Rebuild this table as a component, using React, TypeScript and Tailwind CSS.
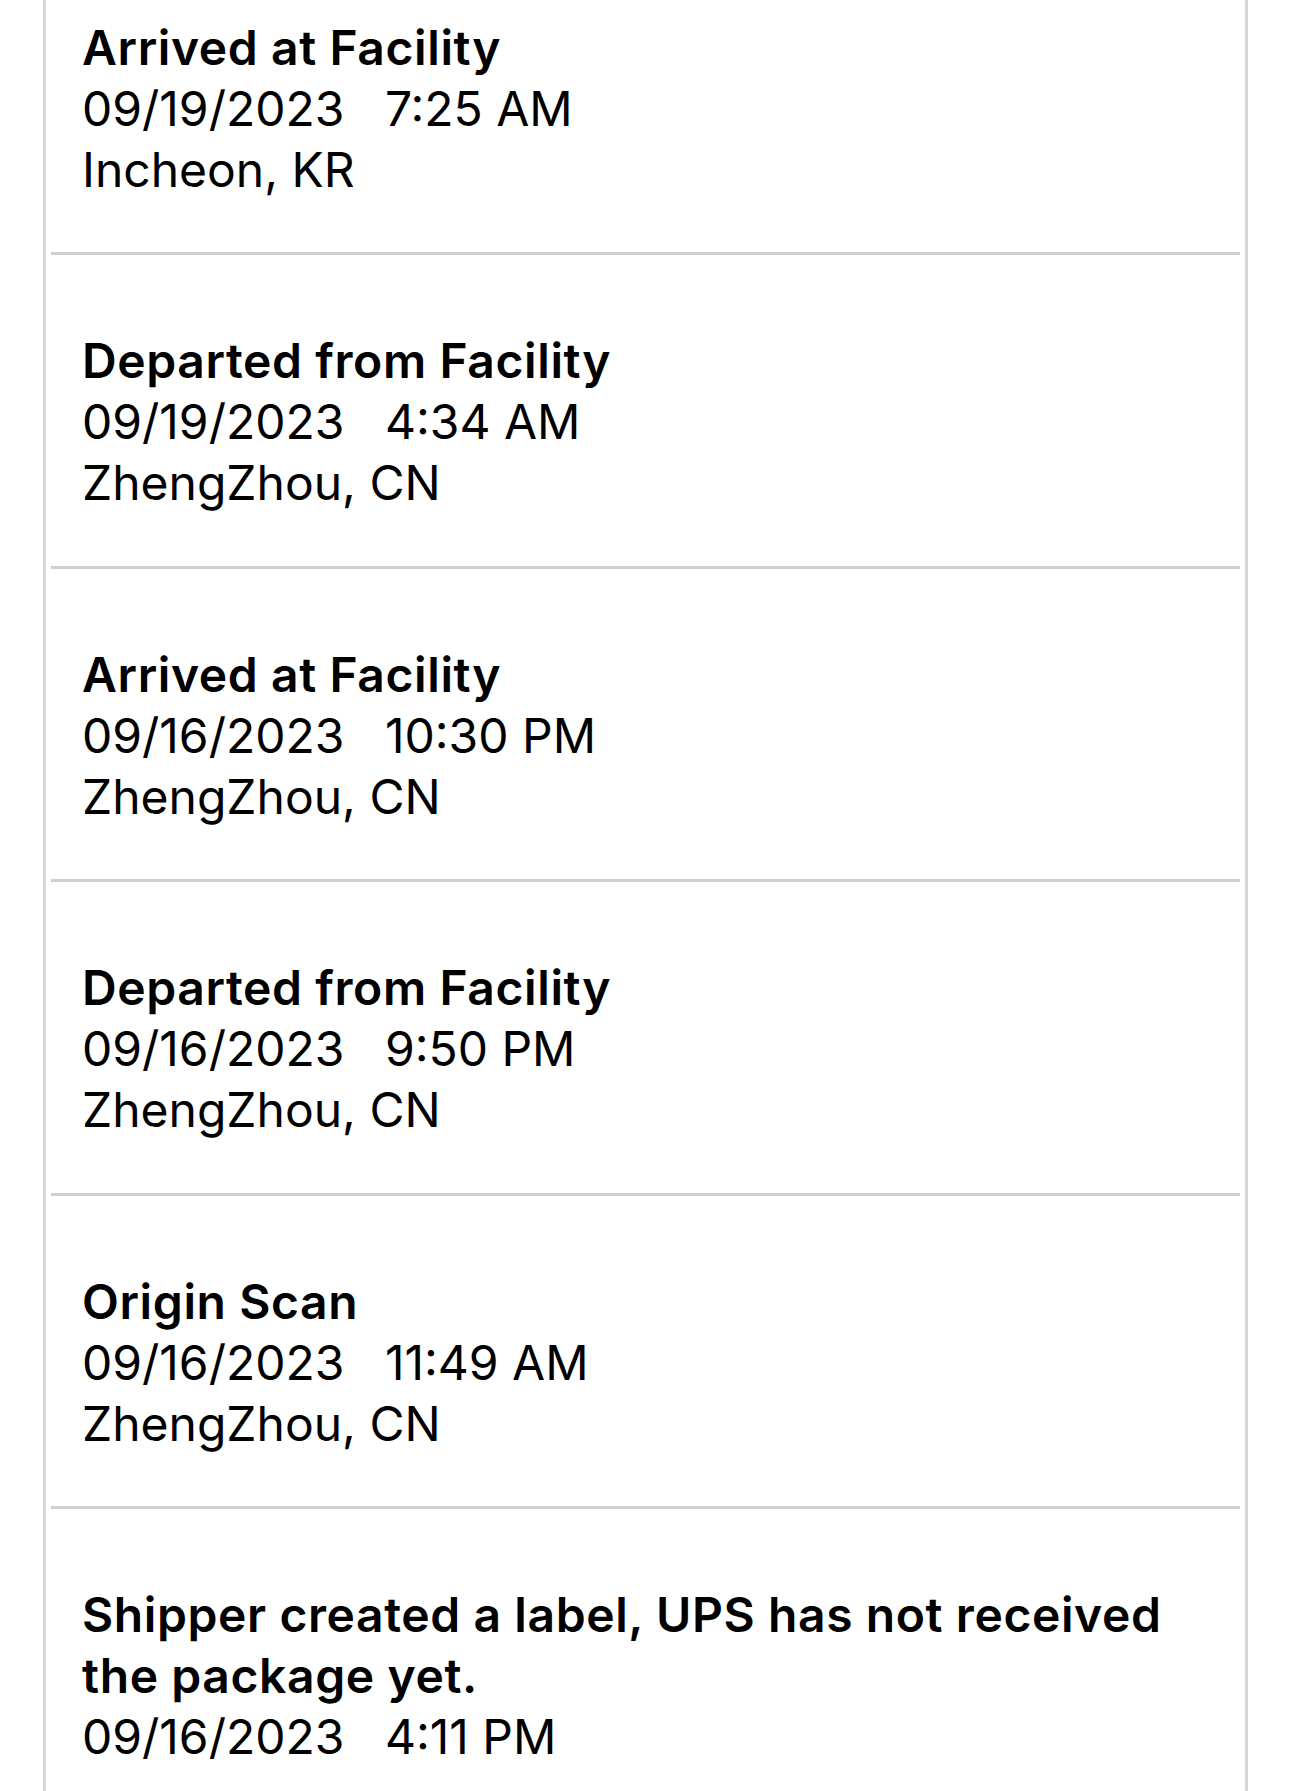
import React from 'react';

type Scan = {
  status: string;
  date: string;
  time: string;
  place?: string;
};

const scans: Scan[] = [
  { status: 'Arrived at Facility', date: '09/19/2023', time: '7:25 AM', place: 'Incheon, KR' },
  { status: 'Departed from Facility', date: '09/19/2023', time: '4:34 AM', place: 'ZhengZhou, CN' },
  { status: 'Arrived at Facility', date: '09/16/2023', time: '10:30 PM', place: 'ZhengZhou, CN' },
  { status: 'Departed from Facility', date: '09/16/2023', time: '9:50 PM', place: 'ZhengZhou, CN' },
  { status: 'Origin Scan', date: '09/16/2023', time: '11:49 AM', place: 'ZhengZhou, CN' },
  { status: 'Shipper created a label, UPS has not received the package yet.', date: '09/16/2023', time: '4:11 PM' },
];

const App = () => {
  return (
    <div
      className="h-[1791px] overflow-hidden bg-white text-black"
      style={{ fontFamily: 'Inter, "Noto Sans", sans-serif' }}
    >
      <div className="ml-[43px] w-[1205px] min-h-full border-x-[3px] border-[#d6d6d6] px-[5px]">
        {scans.map((s, i) => (
          <div
            key={i}
            className={
              i === 0
                ? 'pt-[17px] pb-[52px] pl-[31px] pr-[40px] border-b-[3px] border-[#d3cfca]'
                : i === scans.length - 1
                ? 'pt-[75px] pb-[52px] pl-[31px] pr-[40px]'
                : 'pt-[75px] pb-[52.5px] pl-[31px] pr-[40px] border-b-[3px] border-[#d3cfca]'
            }
          >
            <div className="text-[48px] leading-[61px] font-semibold tracking-[0.6px]">{s.status}</div>
            <div className="text-[48px] leading-[61px] whitespace-pre">
              {s.date + '   ' + s.time}
            </div>
            {s.place && <div className="text-[48px] leading-[61px]">{s.place}</div>}
          </div>
        ))}
      </div>
    </div>
  );
};

export default App;
